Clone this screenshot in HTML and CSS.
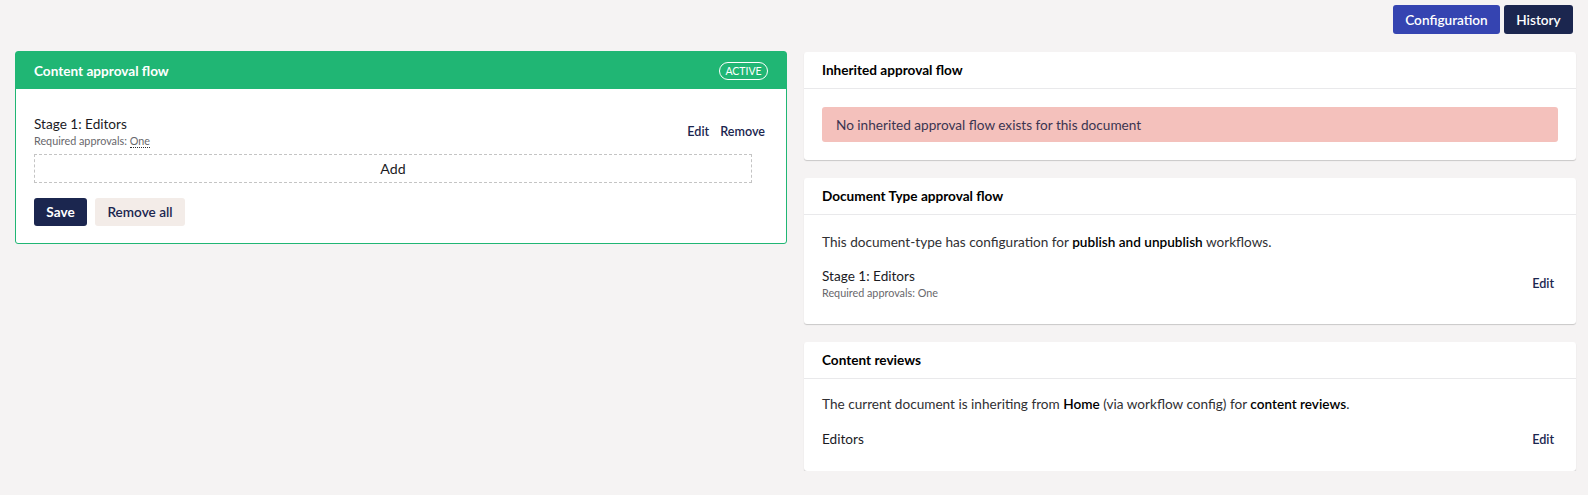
FILE: index.html
```html
<!DOCTYPE html>
<html>
<head>
<meta charset="utf-8">
<link rel="stylesheet" href="styles.css">
</head>
<body>
<div class="page">
  <div class="topbar">
    <button class="btn btn-config">Configuration</button>
    <button class="btn btn-history">History</button>
  </div>
  <div class="grid">
    <div class="col-left">
      <div class="card card-active">
        <div class="card-head green">
          <span class="head-title">Content approval flow</span>
          <span class="badge">ACTIVE</span>
        </div>
        <div class="card-body left-body">
          <div class="stage-row">
            <div class="stage-info">
              <div class="stage-title">Stage 1: Editors</div>
              <div class="stage-sub">Required approvals: <span class="dotted">One</span></div>
            </div>
            <div class="stage-actions">
              <a class="link">Edit</a>
              <a class="link">Remove</a>
            </div>
          </div>
          <div class="add-box">Add</div>
          <div class="actions">
            <button class="btn btn-save">Save</button>
            <button class="btn btn-remove">Remove all</button>
          </div>
        </div>
      </div>
    </div>
    <div class="col-right">
      <div class="card">
        <div class="card-head plain"><span class="head-title">Inherited approval flow</span></div>
        <div class="card-body">
          <div class="alert">No inherited approval flow exists for this document</div>
        </div>
      </div>
      <div class="card">
        <div class="card-head plain"><span class="head-title">Document Type approval flow</span></div>
        <div class="card-body info-body">
          <p class="info">This document-type has configuration for <b>publish and unpublish</b> workflows.</p>
          <div class="stage-row info-row">
            <div class="stage-info">
              <div class="stage-title">Stage 1: Editors</div>
              <div class="stage-sub">Required approvals: One</div>
            </div>
            <div class="stage-actions"><a class="link">Edit</a></div>
          </div>
        </div>
      </div>
      <div class="card">
        <div class="card-head plain"><span class="head-title">Content reviews</span></div>
        <div class="card-body info-body review-body">
          <p class="info">The current document is inheriting from <b>Home</b> (via workflow config) for <b>content reviews</b>.</p>
          <div class="stage-row info-row review-row">
            <div class="stage-title">Editors</div>
            <div class="stage-actions"><a class="link">Edit</a></div>
          </div>
        </div>
      </div>
    </div>
  </div>
</div>
</body>
</html>
```

FILE: styles.css
```css
* { box-sizing: border-box; }
html, body { margin: 0; padding: 0; }
body {
  background: #f5f3f3;
  font-family: Lato, "Open Sans", sans-serif;
  color: #303033;
  font-size: 13.6px;
}
.page { padding: 5px 12px 0 15px; }
.topbar {
  display: flex;
  justify-content: flex-end;
  gap: 4px;
  padding-right: 3px;
}
.btn {
  border: 0;
  border-radius: 3px;
  font-family: Lato, sans-serif;
  font-weight: 700;
  font-size: 13.6px;
  cursor: pointer;
  padding: 0;
}
.btn-config { background: #3544b1; color: #fff; width: 107px; height: 29px; font-weight: 600; }
.btn-history { background: #1b264f; color: #fff; width: 69px; height: 29px; font-weight: 600; }
.grid {
  display: grid;
  grid-template-columns: 1fr 1fr;
  column-gap: 17px;
  margin-top: 17px;
  align-items: start;
}
.col-right { display: flex; flex-direction: column; gap: 18px; margin-top: 1px; }
.card {
  background: #fff;
  border-radius: 3px;
  box-shadow: 0 1px 1px rgba(0,0,0,0.18);
}
.card-active {
  border: 1px solid #20b674;
  box-shadow: none;
}
.card-head {
  height: 37px;
  padding: 0 18px;
  display: flex;
  align-items: center;
  justify-content: space-between;
}
.card-head.green { background: #20b674; height: 37px; color: #fff; }
.card-head.plain { border-bottom: 1px solid #e9e9eb; color: #000; }
.head-title { font-weight: 700; font-size: 13.6px; }
.badge {
  border: 1px solid #fff;
  border-radius: 10px;
  font-size: 10.5px;
  height: 18px;
  width: 49px;
  display: flex;
  align-items: center;
  justify-content: center;
  color: #fff;
}
.card-body { padding: 18px; }
.left-body { padding: 25px 18px 17px 18px; }
.stage-row {
  display: flex;
  align-items: center;
  justify-content: space-between;
  padding-right: 3px;
}
.stage-title { font-size: 13.6px; line-height: 20px; color: #1b1b1f; }
.stage-sub { font-size: 10.8px; line-height: 14px; color: #68676b; }
.dotted { border-bottom: 1px dotted #303033; }
.stage-actions { display: flex; gap: 11px; }
.link { font-size: 12.6px; font-weight: 600; color: #1b264f; cursor: pointer; }
.add-box {
  margin-top: 6px;
  margin-right: 16px;
  height: 29px;
  border: 1px dashed #c4c4c4;
  display: flex;
  align-items: center;
  justify-content: center;
  font-size: 14.2px;
  color: #1b1b1f;
}
.actions { display: flex; gap: 8px; margin-top: 15px; }
.btn-save { background: #1b264f; color: #fff; width: 53px; height: 28px; font-size: 13.6px; }
.btn-remove { background: #f3ece8; color: #1b264f; width: 90px; height: 28px; font-weight: 600; font-size: 13.6px; }
.alert {
  background: #f4c1bc;
  border-radius: 3px;
  height: 35px;
  padding: 0 14px;
  display: flex;
  align-items: center;
  font-size: 13.6px;
  color: #3b3551;
}
.info-body { padding: 17px 22px 24px 18px; }
.info { margin: 0; font-size: 13.6px; line-height: 20px; color: #303033; }
.info b { color: #000; font-weight: 600; }
.info-row { margin-top: 14px; padding-right: 0; }
.review-body { padding-top: 15px; padding-bottom: 22px; }
.review-row { margin-top: 15px; }
.review-row .stage-title { font-size: 13.6px; }
```
